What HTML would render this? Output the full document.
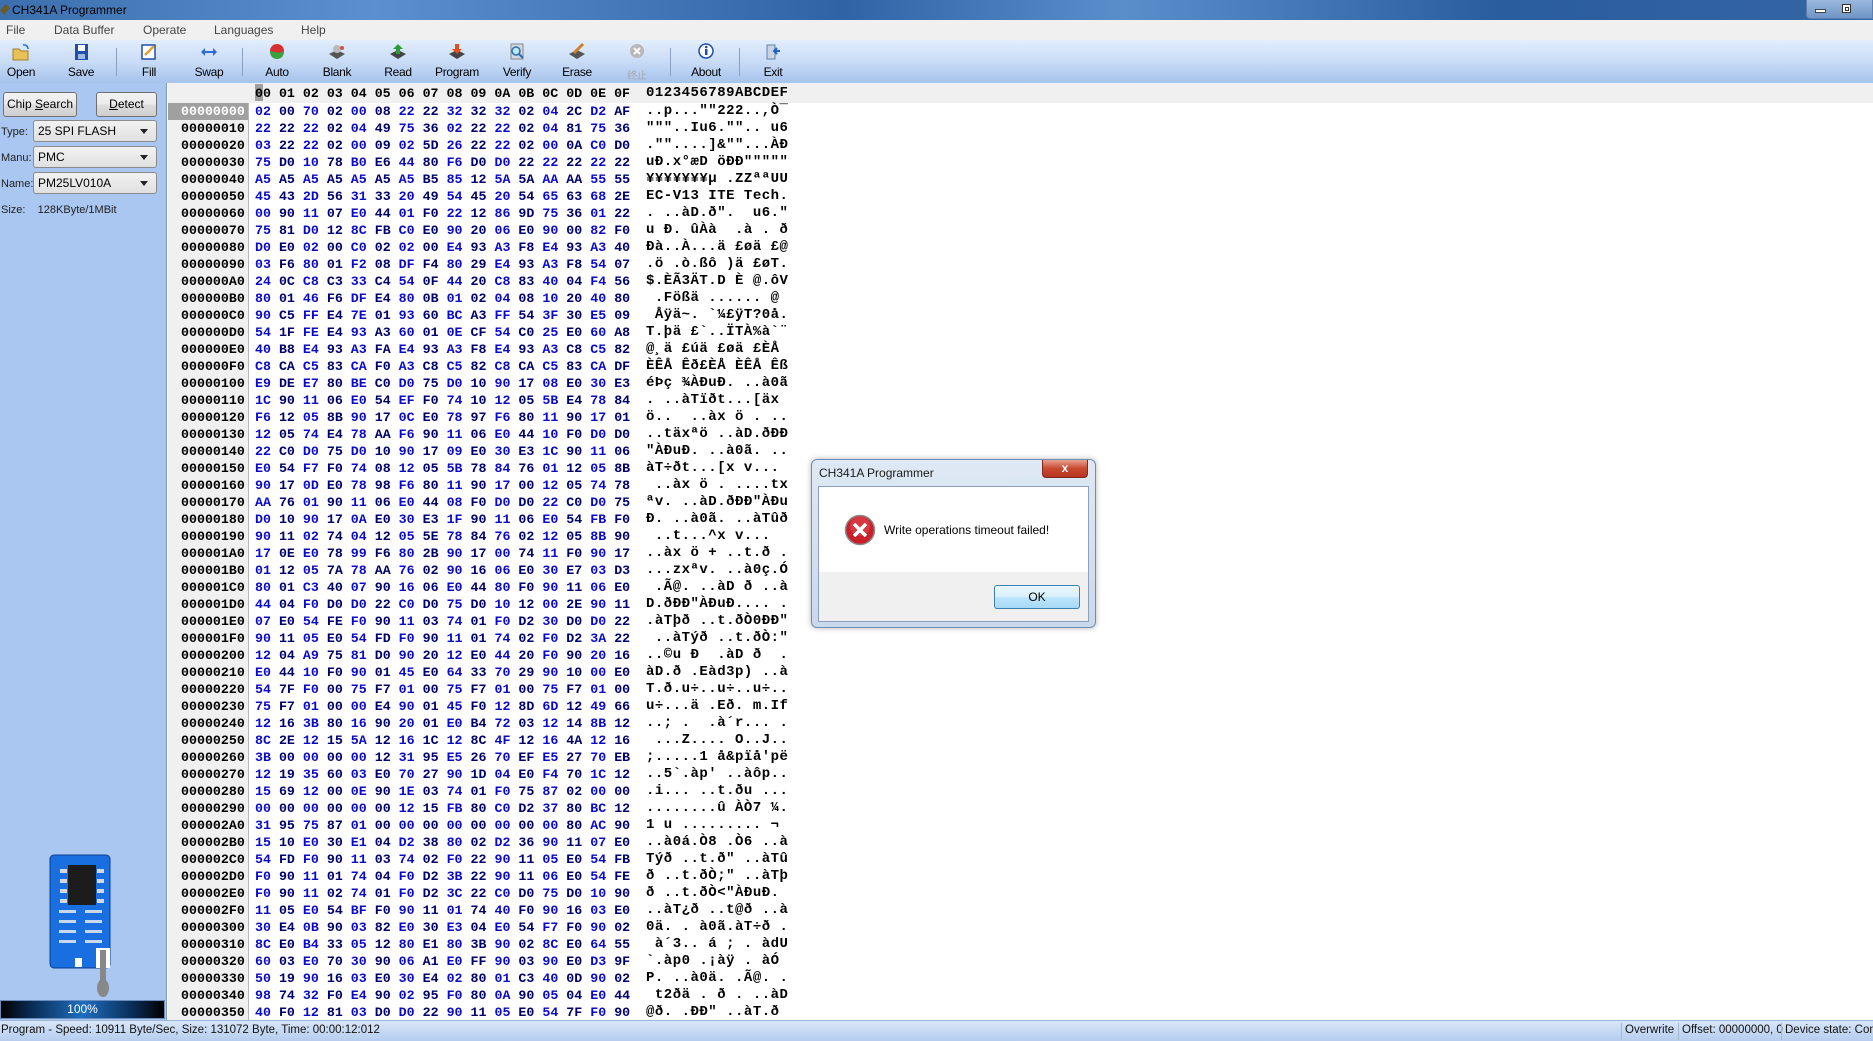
<!DOCTYPE html>
<html><head><meta charset="utf-8">
<style>
*{margin:0;padding:0;box-sizing:border-box}
body{width:1873px;height:1041px;overflow:hidden;position:relative;background:#fff;font-family:"Liberation Sans",sans-serif;font-size:12px;color:#000}
.abs{position:absolute}
#title{left:0;top:0;width:1873px;height:20px;background:linear-gradient(90deg,#3b6fae 0%,#5b8fcf 20%,#2e64a6 45%,#5a8ecb 60%,#2a5d9e 80%,#3565a3 100%)}
#menu{left:0;top:20px;width:1873px;height:20px;background:#f0f0f0}
#menu span{position:absolute;top:3px;font-size:12px;color:#444}
#tb{left:0;top:40px;width:1873px;height:43px;background:linear-gradient(#e2eefd,#c9dcf6 50%,#a6c3ec)}
.tbtn{position:absolute;top:0;width:60px;height:43px;text-align:center}
.tbtn svg{position:absolute;left:21px;top:3px}
.tbtn span{position:absolute;left:0;right:0;top:25px;font-size:12px;letter-spacing:-0.3px}
.sep{position:absolute;top:8px;width:1px;height:28px;background:#8aa0bd}
#left{left:0;top:83px;width:167px;height:937px;background:#a9c7f0;border-right:1px solid #7f9db9}
.btn{position:absolute;height:25px;border:1px solid #707070;border-radius:3px;background:linear-gradient(#f2f2f2,#ebebeb 50%,#dddddd 51%,#cfcfcf);font-size:12px;text-align:center;line-height:23px}
.lbl{position:absolute;font-size:11px;color:#222}
.cmb{position:absolute;left:33px;width:124px;height:22px;border:1px solid #8a8a8a;border-radius:3px;background:linear-gradient(#f2f2f2,#e0e0e0);font-size:12px;line-height:20px;padding-left:4px}
.cmb:after{content:"";position:absolute;right:8px;top:8px;border:4px solid transparent;border-top:5px solid #222}
#hdr{left:168px;top:83px;width:1705px;height:20px;background:#f0f0f0}
#addr{left:168px;top:103px;width:80px;height:917px;background:#f0f0f0}
pre{position:absolute;font-family:"Liberation Mono",monospace;font-weight:bold;font-size:13.3px;line-height:17px;white-space:pre}
#hex{left:255px;top:103px;color:#0a0ac8}
#hex b{color:#00006e}
#adr{left:181px;top:103px;color:#000}
#asc{left:646px;top:103px;color:#000;font-size:14px;letter-spacing:0.5px}
#status{left:0;top:1020px;width:1873px;height:21px;background:linear-gradient(#d8e6f8,#b5cdef);border-top:1px solid #9fb6d6;overflow:hidden}
#status span{position:absolute;top:3px;font-size:11.5px;color:#111;white-space:nowrap}
.vs{position:absolute;top:2px;width:1px;height:17px;background:#a8b8cc}
</style></head><body>

<div id="title" class="abs">
  <svg class="abs" style="left:0;top:3px" width="10" height="14"><path d="M0 7 L6 1 L10 5 L4 12Z" fill="#6b5a2a"/></svg>
  <span class="abs" style="left:12px;top:3px;font-size:12px;color:#000">CH341A Programmer</span>
  <div class="abs" style="left:1806px;top:0;width:67px;height:19px;border:1px solid #5b7fae;border-top:none;border-radius:0 0 0 4px;background:linear-gradient(#9ab8dd,#6f95c6)"></div>
  <div class="abs" style="left:1815px;top:9px;width:11px;height:4px;background:#fff;border:1px solid #444"></div>
  <div class="abs" style="left:1842px;top:4px;width:9px;height:9px;border:1px solid #333;background:#fff"></div>
  <div class="abs" style="left:1845px;top:7px;width:4px;height:4px;border:1px solid #333"></div>
</div>

<div id="menu" class="abs">
  <span style="left:6px">File</span><span style="left:54px">Data Buffer</span><span style="left:143px">Operate</span><span style="left:214px">Languages</span><span style="left:301px">Help</span>
</div>

<div id="tb" class="abs">
  <div class="tbtn" style="left:-9px"><svg width="18" height="18"><path d="M1 6h6l2 2h7v9H1z" fill="#e8c158" stroke="#a0802a"/><path d="M11 2 a4 4 0 0 1 5 4" stroke="#2a6fd0" fill="none" stroke-width="1.5"/></svg><span>Open</span></div>
  <div class="tbtn" style="left:51px"><svg width="18" height="18"><rect x="3" y="1" width="13" height="16" fill="#1f4fa8"/><rect x="6" y="2" width="7" height="6" fill="#fff"/><rect x="6" y="11" width="7" height="5" fill="#9fb8e0"/></svg><span>Save</span></div>
  <div class="sep" style="left:116px"></div>
  <div class="tbtn" style="left:119px"><svg width="18" height="18"><rect x="2" y="2" width="13" height="14" fill="#fff" stroke="#1f4fa8" stroke-width="1.5"/><path d="M5 12 L14 3" stroke="#e0a030" stroke-width="2.5"/></svg><span>Fill</span></div>
  <div class="tbtn" style="left:179px"><svg width="18" height="18"><path d="M1 9 L5 5 V8 H13 V5 L17 9 L13 13 V10 H5 V13Z" fill="#2e6ad8"/></svg><span>Swap</span></div>
  <div class="sep" style="left:242px"></div>
  <div class="tbtn" style="left:247px"><svg width="18" height="18"><circle cx="9" cy="9" r="7" fill="#3aa040"/><path d="M2 8 A7 7 0 0 1 16 8 L11 10Z" fill="#d83030"/></svg><span>Auto</span></div>
  <div class="tbtn" style="left:307px"><svg width="18" height="18"><path d="M1 11 L9 7 L17 11 L9 16Z" fill="#555"/><circle cx="9" cy="6" r="4" fill="#bbb"/><circle cx="14" cy="5" r="2" fill="#d05050"/></svg><span>Blank</span></div>
  <div class="tbtn" style="left:368px"><svg width="18" height="18"><path d="M1 11 L9 7 L17 11 L9 16Z" fill="#444"/><path d="M9 1 L14 6 H11 V11 H7 V6 H4Z" fill="#2e9a3a"/></svg><span>Read</span></div>
  <div class="tbtn" style="left:427px"><svg width="18" height="18"><path d="M1 11 L9 7 L17 11 L9 16Z" fill="#444"/><path d="M9 11 L14 6 H11 V1 H7 V6 H4Z" fill="#e05020"/></svg><span>Program</span></div>
  <div class="tbtn" style="left:487px"><svg width="18" height="18"><rect x="3" y="1" width="12" height="15" fill="#d0d8e0" stroke="#888"/><circle cx="8" cy="8" r="4" fill="#bfe6f5" stroke="#2a70b0" stroke-width="1.5"/><path d="M11 11 L15 15" stroke="#2a70b0" stroke-width="2"/></svg><span>Verify</span></div>
  <div class="tbtn" style="left:547px"><svg width="18" height="18"><path d="M1 11 L9 7 L17 11 L9 16Z" fill="#555"/><path d="M6 10 L15 1" stroke="#d08030" stroke-width="3"/></svg><span>Erase</span></div>
  <div class="tbtn" style="left:607px"><svg width="18" height="18"><circle cx="9" cy="8" r="7" fill="#b8b8b8"/><path d="M6 5 L12 11 M12 5 L6 11" stroke="#fff" stroke-width="2"/></svg><span style="color:#a8a8a8;font-family:'Liberation Sans','Noto Sans CJK SC',sans-serif;font-size:10px;top:27px">终止</span></div>
  <div class="sep" style="left:670px"></div>
  <div class="tbtn" style="left:676px"><svg width="18" height="18"><circle cx="9" cy="8" r="7" fill="#fff" stroke="#1f4fa8" stroke-width="1.5"/><rect x="8" y="6" width="2.5" height="6" fill="#1f4fa8"/><circle cx="9.2" cy="4" r="1.3" fill="#1f4fa8"/></svg><span>About</span></div>
  <div class="sep" style="left:739px"></div>
  <div class="tbtn" style="left:743px"><svg width="18" height="18"><rect x="3" y="2" width="8" height="14" fill="#c8d4e4" stroke="#6080a8"/><path d="M16 8 H11 M13 5 L10 8 L13 11" stroke="#1f60d0" stroke-width="2" fill="none"/></svg><span>Exit</span></div>
</div>

<div id="left" class="abs">
  <div class="btn" style="left:3px;top:9px;width:74px">Chip <u>S</u>earch</div>
  <div class="btn" style="left:96px;top:9px;width:61px"><u>D</u>etect</div>
  <span class="lbl" style="left:1px;top:43px">Type:</span><div class="cmb" style="top:37px">25 SPI FLASH</div>
  <span class="lbl" style="left:1px;top:69px">Manu:</span><div class="cmb" style="top:63px">PMC</div>
  <span class="lbl" style="left:1px;top:95px">Name:</span><div class="cmb" style="top:89px">PM25LV010A</div>
  <span class="lbl" style="left:1px;top:121px">Size:&nbsp;&nbsp;&nbsp; 128KByte/1MBit</span>
  <svg class="abs" style="left:49px;top:771px" width="64" height="145">
    <rect x="1" y="1" width="60" height="113" rx="4" fill="#1a6fe0" stroke="#0b3f90"/>
    <rect x="19" y="11" width="28" height="40" fill="#1c1c1c"/>
    <g fill="#cfd8e4"><rect x="11" y="15" width="7" height="4"/><rect x="11" y="25" width="7" height="4"/><rect x="11" y="35" width="7" height="4"/><rect x="11" y="45" width="7" height="4"/><rect x="48" y="15" width="7" height="4"/><rect x="48" y="25" width="7" height="4"/><rect x="48" y="35" width="7" height="4"/><rect x="48" y="45" width="7" height="4"/></g>
    <g fill="#c8d8f0"><rect x="10" y="56" width="17" height="3"/><rect x="36" y="56" width="17" height="3"/><rect x="10" y="66" width="17" height="3"/><rect x="36" y="66" width="17" height="3"/><rect x="10" y="76" width="17" height="3"/><rect x="36" y="76" width="17" height="3"/><rect x="10" y="86" width="17" height="3"/><rect x="36" y="86" width="17" height="3"/></g>
    <rect x="26" y="104" width="7" height="9" fill="#fff"/>
    <rect x="47" y="94" width="14" height="20" fill="#fff"/>
    <rect x="51" y="96" width="6" height="35" fill="#888"/>
    <ellipse cx="54" cy="134" rx="6" ry="9" fill="#888"/>
  </svg>
  <div class="abs" style="left:0;top:917px;width:165px;height:19px;border:1px solid #6a8dc0;background:linear-gradient(90deg,#000 0%,#0a2f5a 20%,#1e6ec0 50%,#0a2f5a 80%,#000 100%);color:#fff;text-align:center;font-size:12px;line-height:17px">100%</div>
</div>

<div id="hdr" class="abs"></div>
<div id="addr" class="abs"></div>
<div class="abs" style="left:168px;top:103px;width:80px;height:17px;background:#a0a0a0"></div>
<div class="abs" style="left:248px;top:103px;width:1px;height:917px;background:#b8b8b8"></div>
<div class="abs" style="left:255px;top:84px;width:8px;height:17px;background:#a0a0a0"></div>
<pre style="left:255px;top:85px;color:#000">00 01 02 03 04 05 06 07 08 09 0A 0B 0C 0D 0E 0F</pre>
<pre style="left:646px;top:85px;color:#000;font-size:14px;letter-spacing:0.5px">0123456789ABCDEF</pre>

<pre id="adr"><span style="color:#fff">00000000</span>
00000010
00000020
00000030
00000040
00000050
00000060
00000070
00000080
00000090
000000A0
000000B0
000000C0
000000D0
000000E0
000000F0
00000100
00000110
00000120
00000130
00000140
00000150
00000160
00000170
00000180
00000190
000001A0
000001B0
000001C0
000001D0
000001E0
000001F0
00000200
00000210
00000220
00000230
00000240
00000250
00000260
00000270
00000280
00000290
000002A0
000002B0
000002C0
000002D0
000002E0
000002F0
00000300
00000310
00000320
00000330
00000340
00000350</pre>

<pre id="hex">02 <b>00</b> 70 <b>02</b> 00 <b>08</b> 22 <b>22</b> 32 <b>32</b> 32 <b>02</b> 04 <b>2C</b> D2 <b>AF</b>
22 <b>22</b> 22 <b>02</b> 04 <b>49</b> 75 <b>36</b> 02 <b>22</b> 22 <b>02</b> 04 <b>81</b> 75 <b>36</b>
03 <b>22</b> 22 <b>02</b> 00 <b>09</b> 02 <b>5D</b> 26 <b>22</b> 22 <b>02</b> 00 <b>0A</b> C0 <b>D0</b>
75 <b>D0</b> 10 <b>78</b> B0 <b>E6</b> 44 <b>80</b> F6 <b>D0</b> D0 <b>22</b> 22 <b>22</b> 22 <b>22</b>
A5 <b>A5</b> A5 <b>A5</b> A5 <b>A5</b> A5 <b>B5</b> 85 <b>12</b> 5A <b>5A</b> AA <b>AA</b> 55 <b>55</b>
45 <b>43</b> 2D <b>56</b> 31 <b>33</b> 20 <b>49</b> 54 <b>45</b> 20 <b>54</b> 65 <b>63</b> 68 <b>2E</b>
00 <b>90</b> 11 <b>07</b> E0 <b>44</b> 01 <b>F0</b> 22 <b>12</b> 86 <b>9D</b> 75 <b>36</b> 01 <b>22</b>
75 <b>81</b> D0 <b>12</b> 8C <b>FB</b> C0 <b>E0</b> 90 <b>20</b> 06 <b>E0</b> 90 <b>00</b> 82 <b>F0</b>
D0 <b>E0</b> 02 <b>00</b> C0 <b>02</b> 02 <b>00</b> E4 <b>93</b> A3 <b>F8</b> E4 <b>93</b> A3 <b>40</b>
03 <b>F6</b> 80 <b>01</b> F2 <b>08</b> DF <b>F4</b> 80 <b>29</b> E4 <b>93</b> A3 <b>F8</b> 54 <b>07</b>
24 <b>0C</b> C8 <b>C3</b> 33 <b>C4</b> 54 <b>0F</b> 44 <b>20</b> C8 <b>83</b> 40 <b>04</b> F4 <b>56</b>
80 <b>01</b> 46 <b>F6</b> DF <b>E4</b> 80 <b>0B</b> 01 <b>02</b> 04 <b>08</b> 10 <b>20</b> 40 <b>80</b>
90 <b>C5</b> FF <b>E4</b> 7E <b>01</b> 93 <b>60</b> BC <b>A3</b> FF <b>54</b> 3F <b>30</b> E5 <b>09</b>
54 <b>1F</b> FE <b>E4</b> 93 <b>A3</b> 60 <b>01</b> 0E <b>CF</b> 54 <b>C0</b> 25 <b>E0</b> 60 <b>A8</b>
40 <b>B8</b> E4 <b>93</b> A3 <b>FA</b> E4 <b>93</b> A3 <b>F8</b> E4 <b>93</b> A3 <b>C8</b> C5 <b>82</b>
C8 <b>CA</b> C5 <b>83</b> CA <b>F0</b> A3 <b>C8</b> C5 <b>82</b> C8 <b>CA</b> C5 <b>83</b> CA <b>DF</b>
E9 <b>DE</b> E7 <b>80</b> BE <b>C0</b> D0 <b>75</b> D0 <b>10</b> 90 <b>17</b> 08 <b>E0</b> 30 <b>E3</b>
1C <b>90</b> 11 <b>06</b> E0 <b>54</b> EF <b>F0</b> 74 <b>10</b> 12 <b>05</b> 5B <b>E4</b> 78 <b>84</b>
F6 <b>12</b> 05 <b>8B</b> 90 <b>17</b> 0C <b>E0</b> 78 <b>97</b> F6 <b>80</b> 11 <b>90</b> 17 <b>01</b>
12 <b>05</b> 74 <b>E4</b> 78 <b>AA</b> F6 <b>90</b> 11 <b>06</b> E0 <b>44</b> 10 <b>F0</b> D0 <b>D0</b>
22 <b>C0</b> D0 <b>75</b> D0 <b>10</b> 90 <b>17</b> 09 <b>E0</b> 30 <b>E3</b> 1C <b>90</b> 11 <b>06</b>
E0 <b>54</b> F7 <b>F0</b> 74 <b>08</b> 12 <b>05</b> 5B <b>78</b> 84 <b>76</b> 01 <b>12</b> 05 <b>8B</b>
90 <b>17</b> 0D <b>E0</b> 78 <b>98</b> F6 <b>80</b> 11 <b>90</b> 17 <b>00</b> 12 <b>05</b> 74 <b>78</b>
AA <b>76</b> 01 <b>90</b> 11 <b>06</b> E0 <b>44</b> 08 <b>F0</b> D0 <b>D0</b> 22 <b>C0</b> D0 <b>75</b>
D0 <b>10</b> 90 <b>17</b> 0A <b>E0</b> 30 <b>E3</b> 1F <b>90</b> 11 <b>06</b> E0 <b>54</b> FB <b>F0</b>
90 <b>11</b> 02 <b>74</b> 04 <b>12</b> 05 <b>5E</b> 78 <b>84</b> 76 <b>02</b> 12 <b>05</b> 8B <b>90</b>
17 <b>0E</b> E0 <b>78</b> 99 <b>F6</b> 80 <b>2B</b> 90 <b>17</b> 00 <b>74</b> 11 <b>F0</b> 90 <b>17</b>
01 <b>12</b> 05 <b>7A</b> 78 <b>AA</b> 76 <b>02</b> 90 <b>16</b> 06 <b>E0</b> 30 <b>E7</b> 03 <b>D3</b>
80 <b>01</b> C3 <b>40</b> 07 <b>90</b> 16 <b>06</b> E0 <b>44</b> 80 <b>F0</b> 90 <b>11</b> 06 <b>E0</b>
44 <b>04</b> F0 <b>D0</b> D0 <b>22</b> C0 <b>D0</b> 75 <b>D0</b> 10 <b>12</b> 00 <b>2E</b> 90 <b>11</b>
07 <b>E0</b> 54 <b>FE</b> F0 <b>90</b> 11 <b>03</b> 74 <b>01</b> F0 <b>D2</b> 30 <b>D0</b> D0 <b>22</b>
90 <b>11</b> 05 <b>E0</b> 54 <b>FD</b> F0 <b>90</b> 11 <b>01</b> 74 <b>02</b> F0 <b>D2</b> 3A <b>22</b>
12 <b>04</b> A9 <b>75</b> 81 <b>D0</b> 90 <b>20</b> 12 <b>E0</b> 44 <b>20</b> F0 <b>90</b> 20 <b>16</b>
E0 <b>44</b> 10 <b>F0</b> 90 <b>01</b> 45 <b>E0</b> 64 <b>33</b> 70 <b>29</b> 90 <b>10</b> 00 <b>E0</b>
54 <b>7F</b> F0 <b>00</b> 75 <b>F7</b> 01 <b>00</b> 75 <b>F7</b> 01 <b>00</b> 75 <b>F7</b> 01 <b>00</b>
75 <b>F7</b> 01 <b>00</b> 00 <b>E4</b> 90 <b>01</b> 45 <b>F0</b> 12 <b>8D</b> 6D <b>12</b> 49 <b>66</b>
12 <b>16</b> 3B <b>80</b> 16 <b>90</b> 20 <b>01</b> E0 <b>B4</b> 72 <b>03</b> 12 <b>14</b> 8B <b>12</b>
8C <b>2E</b> 12 <b>15</b> 5A <b>12</b> 16 <b>1C</b> 12 <b>8C</b> 4F <b>12</b> 16 <b>4A</b> 12 <b>16</b>
3B <b>00</b> 00 <b>00</b> 00 <b>12</b> 31 <b>95</b> E5 <b>26</b> 70 <b>EF</b> E5 <b>27</b> 70 <b>EB</b>
12 <b>19</b> 35 <b>60</b> 03 <b>E0</b> 70 <b>27</b> 90 <b>1D</b> 04 <b>E0</b> F4 <b>70</b> 1C <b>12</b>
15 <b>69</b> 12 <b>00</b> 0E <b>90</b> 1E <b>03</b> 74 <b>01</b> F0 <b>75</b> 87 <b>02</b> 00 <b>00</b>
00 <b>00</b> 00 <b>00</b> 00 <b>00</b> 12 <b>15</b> FB <b>80</b> C0 <b>D2</b> 37 <b>80</b> BC <b>12</b>
31 <b>95</b> 75 <b>87</b> 01 <b>00</b> 00 <b>00</b> 00 <b>00</b> 00 <b>00</b> 00 <b>80</b> AC <b>90</b>
15 <b>10</b> E0 <b>30</b> E1 <b>04</b> D2 <b>38</b> 80 <b>02</b> D2 <b>36</b> 90 <b>11</b> 07 <b>E0</b>
54 <b>FD</b> F0 <b>90</b> 11 <b>03</b> 74 <b>02</b> F0 <b>22</b> 90 <b>11</b> 05 <b>E0</b> 54 <b>FB</b>
F0 <b>90</b> 11 <b>01</b> 74 <b>04</b> F0 <b>D2</b> 3B <b>22</b> 90 <b>11</b> 06 <b>E0</b> 54 <b>FE</b>
F0 <b>90</b> 11 <b>02</b> 74 <b>01</b> F0 <b>D2</b> 3C <b>22</b> C0 <b>D0</b> 75 <b>D0</b> 10 <b>90</b>
11 <b>05</b> E0 <b>54</b> BF <b>F0</b> 90 <b>11</b> 01 <b>74</b> 40 <b>F0</b> 90 <b>16</b> 03 <b>E0</b>
30 <b>E4</b> 0B <b>90</b> 03 <b>82</b> E0 <b>30</b> E3 <b>04</b> E0 <b>54</b> F7 <b>F0</b> 90 <b>02</b>
8C <b>E0</b> B4 <b>33</b> 05 <b>12</b> 80 <b>E1</b> 80 <b>3B</b> 90 <b>02</b> 8C <b>E0</b> 64 <b>55</b>
60 <b>03</b> E0 <b>70</b> 30 <b>90</b> 06 <b>A1</b> E0 <b>FF</b> 90 <b>03</b> 90 <b>E0</b> D3 <b>9F</b>
50 <b>19</b> 90 <b>16</b> 03 <b>E0</b> 30 <b>E4</b> 02 <b>80</b> 01 <b>C3</b> 40 <b>0D</b> 90 <b>02</b>
98 <b>74</b> 32 <b>F0</b> E4 <b>90</b> 02 <b>95</b> F0 <b>80</b> 0A <b>90</b> 05 <b>04</b> E0 <b>44</b>
40 <b>F0</b> 12 <b>81</b> 03 <b>D0</b> D0 <b>22</b> 90 <b>11</b> 05 <b>E0</b> 54 <b>7F</b> F0 <b>90</b></pre>

<pre id="asc">..p...""222..,Ò¯
"""..Iu6."".. u6
.""....]&amp;""...ÀÐ
uÐ.x°æD öÐÐ"""""
¥¥¥¥¥¥¥µ .ZZªªUU
EC-V13 ITE Tech.
. ..àD.ð".  u6."
u Ð. ûÀà  .à . ð
Ðà..À...ä £øä £@
.ö .ò.ßô )ä £øT.
$.ÈÃ3ÄT.D È @.ôV
 .Fößä ...... @ 
 Åÿä~. `¼£ÿT?0å.
T.þä £`..ÏTÀ%à`¨
@¸ä £úä £øä £ÈÅ 
ÈÊÅ Êð£ÈÅ ÈÊÅ Êß
éÞç ¾ÀÐuÐ. ..à0ã
. ..àTïðt...[äx 
ö..  ..àx ö . ..
..täxªö ..àD.ðÐÐ
"ÀÐuÐ. ..à0ã. ..
àT÷ðt...[x v... 
 ..àx ö . ....tx
ªv. ..àD.ðÐÐ"ÀÐu
Ð. ..à0ã. ..àTûð
 ..t...^x v...  
..àx ö + ..t.ð .
...zxªv. ..à0ç.Ó
 .Ã@. ..àD ð ..à
D.ðÐÐ"ÀÐuÐ.... .
.àTþð ..t.ðÒ0ÐÐ"
 ..àTýð ..t.ðÒ:"
..©u Ð  .àD ð  .
àD.ð .Eàd3p) ..à
T.ð.u÷..u÷..u÷..
u÷...ä .Eð. m.If
..; .  .à´r... .
 ...Z.... O..J..
;.....1 å&amp;pïå'pë
..5`.àp' ..àôp..
.i... ..t.ðu ...
........û ÀÒ7 ¼.
1 u ......... ¬ 
..à0á.Ò8 .Ò6 ..à
Týð ..t.ð" ..àTû
ð ..t.ðÒ;" ..àTþ
ð ..t.ðÒ&lt;"ÀÐuÐ. 
..àT¿ð ..t@ð ..à
0ä. . à0ã.àT÷ð .
 à´3.. á ; . àdU
`.àp0 .¡àÿ . àÓ 
P. ..à0ä. .Ã@. .
 t2ðä . ð . ..àD
@ð. .ÐÐ" ..àT.ð </pre>

<div class="abs" style="left:811px;top:459px;width:285px;height:169px;border:1px solid #6d8fb5;border-radius:6px;background:linear-gradient(#dfe9f5,#c9d9ec);box-shadow:0 0 6px rgba(0,0,0,.3)">
  <span class="abs" style="left:7px;top:6px;font-size:12px;color:#1a1a1a">CH341A Programmer</span>
  <div class="abs" style="left:230px;top:0;width:46px;height:18px;border:1px solid #7a2a20;border-top:none;border-radius:0 0 4px 4px;background:linear-gradient(#e8a090,#c84a30 50%,#b8341e);color:#fff;font-weight:bold;font-size:12px;text-align:center;line-height:16px">x</div>
  <div class="abs" style="left:6px;top:26px;width:271px;height:136px;border:1px solid #8aa0b8;background:#f0f0f0">
    <div class="abs" style="left:0;top:0;width:269px;height:85px;background:#fff"></div>
    <svg class="abs" style="left:25px;top:27px" width="32" height="32"><circle cx="16" cy="16" r="14.5" fill="#c8202a" stroke="#8a8a8a" stroke-width="1.5"/><circle cx="16" cy="12" r="10" fill="#e05058" opacity=".5"/><path d="M10 10 L22 22 M22 10 L10 22" stroke="#fff" stroke-width="3.5"/></svg>
    <span class="abs" style="left:65px;top:36px;font-size:12px">Write operations timeout failed!</span>
    <div class="abs" style="left:175px;top:98px;width:86px;height:24px;border:1px solid #3c7fb1;border-radius:3px;background:linear-gradient(#eaf6fd,#d9f0fc 50%,#bee6fd 51%,#a7d9f5);text-align:center;line-height:22px;font-size:12px">OK</div>
  </div>
</div>

<div id="status" class="abs">
  <span style="left:1px">Program - Speed: 10911 Byte/Sec, Size: 131072 Byte, Time: 00:00:12:012</span>
  <div class="vs" style="left:1621px"></div><span style="left:1625px">Overwrite</span>
  <div class="vs" style="left:1678px"></div><span style="left:1682px">Offset: 00000000, 0</span>
  <div class="vs" style="left:1781px"></div><span style="left:1785px">Device state: Connected</span>
</div>
</body></html>
